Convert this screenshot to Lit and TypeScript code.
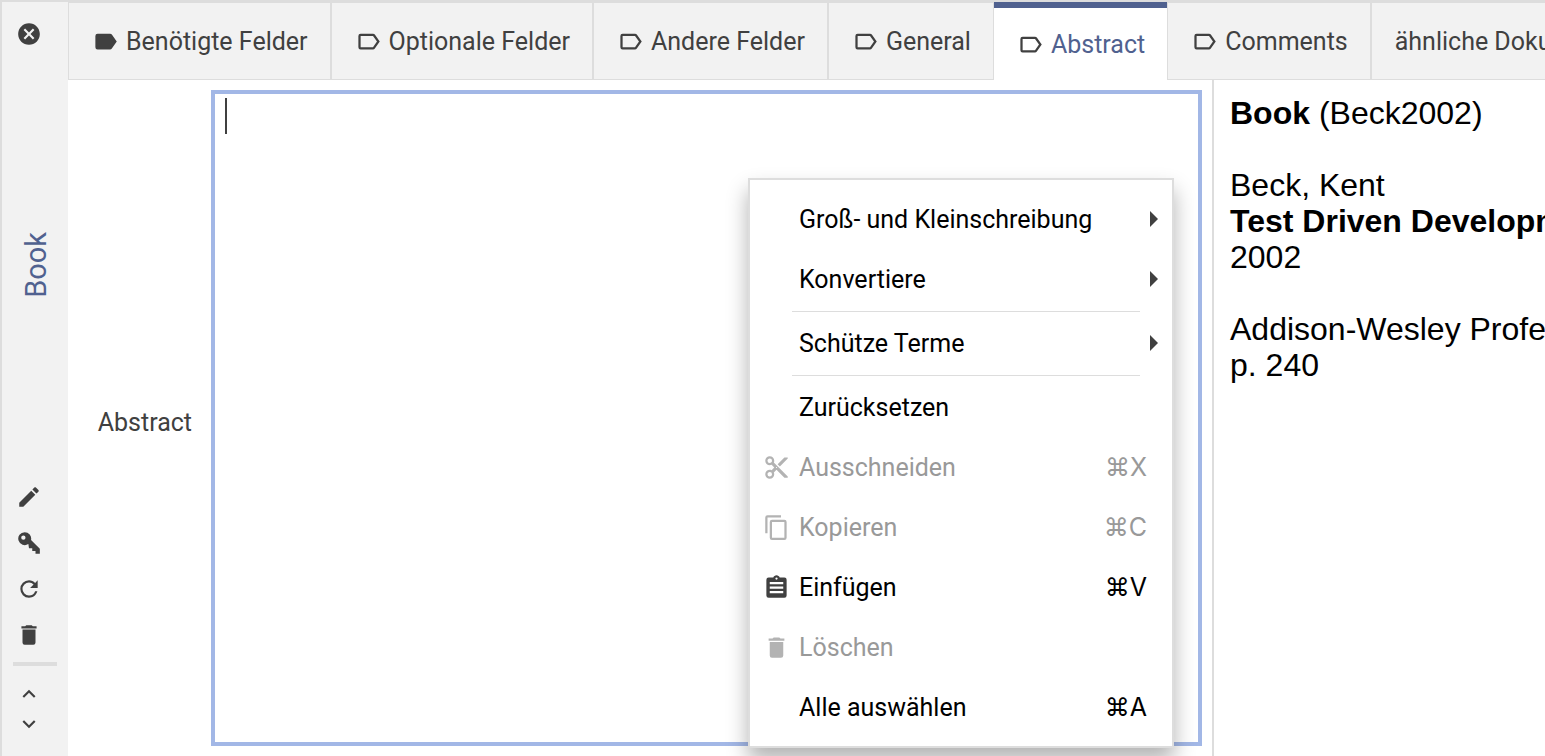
import { LitElement, html, css, svg, nothing } from "lit";
import { customElement, property, state } from "lit/decorators.js";
import { classMap } from "lit/directives/class-map.js";

const ICONS: Record<string, string> = {
  close:
    "M12 2C6.47 2 2 6.47 2 12s4.47 10 10 10 10-4.47 10-10S17.53 2 12 2ZM15.59 7 17 8.41 13.41 12 17 15.59 15.59 17 12 13.41 8.41 17 7 15.59 10.59 12 7 8.41 8.41 7 12 10.59Z",
  pencil:
    "M20.71 7.04c.39-.39.39-1.04 0-1.41l-2.34-2.34c-.37-.39-1.02-.39-1.41 0l-1.84 1.83 3.75 3.75M3 17.25V21h3.75L17.81 9.93l-3.75-3.75L3 17.25Z",
  key: "M8 2a6 6 0 0 1 5.900 7.200L22 17.400V22h-4v-2.600h-3v-2.600h-3L11.400 13A6 6 0 1 1 8 2ZM6.800 5.100a2 2 0 1 0 0 4 2 2 0 0 0 0-4Z",
  refresh:
    "M17.65 6.35C16.2 4.9 14.21 4 12 4a8 8 0 0 0-8 8 8 8 0 0 0 8 8c3.73 0 6.84-2.55 7.73-6h-2.08A5.99 5.99 0 0 1 12 18a6 6 0 0 1-6-6 6 6 0 0 1 6-6c1.66 0 3.14.69 4.22 1.78L13 11h7V4l-2.35 2.35Z",
  trash:
    "M19 4h-3.5l-1-1h-5l-1 1H5v2h14M6 19a2 2 0 0 0 2 2h8a2 2 0 0 0 2-2V7H6v12Z",
  up: "M7.41 15.41 12 10.83l4.59 4.58L18 14l-6-6-6 6 1.41 1.41Z",
  down: "M7.41 8.58 12 13.17l4.59-4.59L18 10l-6 6-6-6 1.41-1.42Z",
  label:
    "M17.63 5.84C17.27 5.33 16.67 5 16 5H5a2 2 0 0 0-2 2v10a2 2 0 0 0 2 2h11c.67 0 1.27-.34 1.63-.85L22 12l-4.37-6.16Z",
  labelOutline:
    "M16 17H5V7h11l3.55 5M17.63 5.84C17.27 5.33 16.67 5 16 5H5a2 2 0 0 0-2 2v10a2 2 0 0 0 2 2h11c.67 0 1.27-.34 1.63-.85L22 12l-4.37-6.16Z",
  cut: "M19 3l-6 6 2 2 7-7V3M12 12.500a.5.5 0 0 1-.5-.5.5.5 0 0 1 .5-.5.5.5 0 0 1 .5.5.5.5 0 0 1-.5.5M6 20a2 2 0 0 1-2-2c0-1.110.890-2 2-2a2 2 0 0 1 2 2c0 1.110-.890 2-2 2M6 8a2 2 0 0 1-2-2c0-1.110.890-2 2-2a2 2 0 0 1 2 2c0 1.110-.890 2-2 2m3.640-.360c.230-.5.360-1.050.360-1.640a4 4 0 0 0-4-4 4 4 0 0 0-4 4 4 4 0 0 0 4 4c.590 0 1.140-.130 1.640-.360L10 12l-2.360 2.360C7.140 14.130 6.590 14 6 14a4 4 0 0 0-4 4 4 4 0 0 0 4 4 4 4 0 0 0 4-4c0-.590-.130-1.140-.360-1.640L12 14l7 7h3v-1L9.640 7.640Z",
  copy: "M19 21H8V7h11m0-2H8a2 2 0 0 0-2 2v14a2 2 0 0 0 2 2h11a2 2 0 0 0 2-2V7a2 2 0 0 0-2-2m-3-4H4a2 2 0 0 0-2 2v14h2V3h12V1Z",
  paste:
    "M19 3h-4.180C14.400 1.840 13.300 1 12 1s-2.400.840-2.820 2H5a2 2 0 0 0-2 2v14a2 2 0 0 0 2 2h14a2 2 0 0 0 2-2V5a2 2 0 0 0-2-2m-7 0a1 1 0 0 1 1 1 1 1 0 0 1-1 1 1 1 0 0 1-1-1 1 1 0 0 1 1-1M6 7h12v2H6V7m0 4h12v2H6v-2m0 4h12v2H6v-2Z",
};

const icon = (name: string) => html`
  <svg class="icon" viewBox="0 0 24 24" aria-hidden="true">
    ${svg`<path fill="currentColor" fill-rule="evenodd" d=${ICONS[name]}></path>`}
  </svg>
`;

const base = css`
  * {
    box-sizing: border-box;
  }
  button {
    font: inherit;
    color: inherit;
    margin: 0;
    padding: 0;
    border: 0;
    background: none;
    text-align: left;
  }
  .icon {
    display: block;
    flex: none;
    width: 27px;
    height: 27px;
  }
  .title {
    padding-top: 2px;
  }
`;

@customElement("entry-sidebar")
class EntrySidebar extends LitElement {
  static styles = [
    base,
    css`
      :host {
        display: flex;
        flex-direction: column;
        padding: 9px 11px 17px;
        border-left: 2px solid #dddddd;
        background: #f2f2f2;
        color: #404040;
      }
      .icon {
        width: 26px;
        height: 26px;
      }
      .tool {
        display: grid;
        place-items: center;
        width: 32px;
        height: 46px;
      }
      .step {
        height: 30px;
      }
      .type {
        flex: 1;
        display: grid;
        place-items: center;
        padding-bottom: 2px;
        color: #50618f;
        font-size: 29px;
        line-height: 46px;
      }
      .type span {
        writing-mode: vertical-rl;
        rotate: 180deg;
      }
      hr {
        width: 44px;
        height: 4px;
        margin: 4px 0 13px;
        border: 0;
        background: #dddddd;
      }
    `,
  ];

  render() {
    const tool = (name: string, label: string, step = false) => html`
      <button class=${classMap({ tool: true, step })} aria-label=${label}>${icon(name)}</button>
    `;
    return html`
      ${tool("close", "Schließen")}
      <div class="type"><span>Book</span></div>
      ${tool("pencil", "Typ ändern")} ${tool("key", "Schlüssel erzeugen")}
      ${tool("refresh", "Aktualisieren")} ${tool("trash", "Löschen")}
      <hr />
      ${tool("up", "Vorheriger Eintrag", true)} ${tool("down", "Nächster Eintrag", true)}
    `;
  }
}

interface Tab {
  title: string;
  icon?: string;
}

@customElement("entry-tabs")
class EntryTabs extends LitElement {
  @property({ attribute: false }) tabs: Tab[] = [];
  @property() selected = "";

  static styles = [
    base,
    css`
      :host {
        display: block;
        overflow: hidden;
      }
      .tabs {
        display: flex;
        height: 78px;
      }
      .tab {
        display: flex;
        flex: none;
        align-items: center;
        gap: 7px;
        padding: 0 22px 0 23px;
        border: 1px solid #dddddd;
        background: #f2f2f2;
        color: #404040;
        white-space: nowrap;
      }
      .active {
        border-width: 6px 0 0;
        border-color: #50618f;
        background: #ffffff;
      }
      .active .title {
        color: #50618f;
      }
    `,
  ];

  private pick(title: string) {
    this.dispatchEvent(new CustomEvent("pick", { detail: title }));
  }

  render() {
    return html`
      <div class="tabs" role="tablist">
        ${this.tabs.map((t) => {
          const active = t.title === this.selected;
          return html`
            <button
              class=${classMap({ tab: true, active })}
              role="tab"
              aria-selected=${active}
              @click=${() => this.pick(t.title)}
            >
              ${t.icon ? icon(t.icon) : nothing}
              <span class="title">${t.title}</span>
            </button>
          `;
        })}
      </div>
    `;
  }
}

interface Item {
  text: string;
  icon?: string;
  keys?: string;
  submenu?: boolean;
  disabled?: boolean;
}

const MENU: Item[][] = [
  [
    { text: "Groß- und Kleinschreibung", submenu: true },
    { text: "Konvertiere", submenu: true },
  ],
  [{ text: "Schütze Terme", submenu: true }],
  [
    { text: "Zurücksetzen" },
    { text: "Ausschneiden", icon: "cut", keys: "⌘X", disabled: true },
    { text: "Kopieren", icon: "copy", keys: "⌘C", disabled: true },
    { text: "Einfügen", icon: "paste", keys: "⌘V" },
    { text: "Löschen", icon: "trash", disabled: true },
    { text: "Alle auswählen", keys: "⌘A" },
  ],
];

@customElement("field-menu")
class FieldMenu extends LitElement {
  static styles = [
    base,
    css`
      :host {
        display: block;
        width: 426px;
        padding: 9px 0;
        border: 2px solid #dddddd;
        background: #ffffff;
        box-shadow: 0 12px 20px rgba(0, 0, 0, 0.3);
        color: #000000;
      }
      .group + .group {
        padding-top: 4px;
        background: linear-gradient(#dddddd, #dddddd) 42px 2px / calc(100% - 74px) 1px no-repeat;
      }
      .item {
        display: grid;
        grid-template-columns: 27px 1fr auto;
        align-items: center;
        gap: 9px;
        width: 100%;
        height: 60px;
        padding: 0 25px 0 13px;
      }
      .submenu {
        padding-right: 14px;
      }
      .mark {
        color: #404040;
      }
      .item:disabled {
        color: #999999;
      }
      .item:disabled .mark {
        color: #b3b3b3;
      }
      .keys {
        font-family: Inter, sans-serif;
      }
      .arrow {
        display: block;
        width: 8px;
        height: 16px;
        background: #404040;
        clip-path: polygon(0 0, 100% 50%, 0 100%);
      }
    `,
  ];

  render() {
    return MENU.map(
      (group) => html`
        <div class="group" role="group">
          ${group.map(
            (i) => html`
              <button
                class=${classMap({ item: true, submenu: !!i.submenu })}
                role="menuitem"
                ?disabled=${i.disabled}
              >
                <span class="mark">${i.icon ? icon(i.icon) : nothing}</span>
                <span class="title">${i.text}</span>
                ${i.submenu
                  ? html`<span class="arrow"></span>`
                  : html`<span class="keys">${i.keys ?? ""}</span>`}
              </button>
            `,
          )}
        </div>
      `,
    );
  }
}

@customElement("app-root")
class AppRoot extends LitElement {
  @state() private selected = "Abstract";

  private tabs: Tab[] = [
    { title: "Benötigte Felder", icon: "label" },
    { title: "Optionale Felder", icon: "labelOutline" },
    { title: "Andere Felder", icon: "labelOutline" },
    { title: "General", icon: "labelOutline" },
    { title: "Abstract", icon: "labelOutline" },
    { title: "Comments", icon: "labelOutline" },
    { title: "ähnliche Dokumente" },
  ];

  static styles = [
    base,
    css`
      :host {
        display: grid;
        grid-template-columns: 68px minmax(0, 1fr);
        min-height: 100vh;
        overflow: hidden;
        border-top: 2px solid #dddddd;
        box-sizing: border-box;
        background: #ffffff;
        color: #404040;
        font-family: Roboto, Inter, sans-serif;
        font-size: 25px;
        line-height: 30px;
      }
      .main {
        display: grid;
        grid-template-rows: auto minmax(0, 1fr);
      }
      .content {
        display: grid;
        grid-template-columns: minmax(0, 1fr) 333px;
      }
      .form {
        display: grid;
        grid-template-columns: 124px minmax(0, 1fr);
        align-items: center;
        gap: 19px;
        padding: 10px 10px 10px 0;
      }
      .form label {
        padding-top: 10px;
        text-align: right;
      }
      .field {
        position: relative;
        align-self: stretch;
        display: grid;
      }
      textarea {
        width: 100%;
        padding: 4px 10px;
        border: 4px solid #a2b7e6;
        border-radius: 0;
        outline: 0;
        resize: none;
        background: #ffffff;
        color: #404040;
        caret-color: transparent;
        font: inherit;
      }
      .caret {
        position: absolute;
        left: 14px;
        top: 8px;
        width: 2px;
        height: 36px;
        background: #404040;
      }
      field-menu {
        position: absolute;
        left: 537px;
        top: 88px;
      }
      .preview {
        overflow: hidden;
        padding: 15px 0 0 16px;
        border-left: 2px solid #dddddd;
        color: #000000;
        font-family: "Liberation Sans", Arial, sans-serif;
        font-size: 32px;
        line-height: 36px;
        white-space: nowrap;
      }
      .preview p {
        margin: 0 0 36px;
      }
    `,
  ];

  render() {
    return html`
      <entry-sidebar></entry-sidebar>
      <div class="main">
        <entry-tabs
          .tabs=${this.tabs}
          .selected=${this.selected}
          @pick=${(e: CustomEvent<string>) => (this.selected = e.detail)}
        ></entry-tabs>
        <div class="content">
          <div class="form">
            <label for="abstract">Abstract</label>
            <div class="field">
              <textarea id="abstract"></textarea>
              <span class="caret"></span>
              <field-menu role="menu"></field-menu>
            </div>
          </div>
          <section class="preview">
            <p><b>Book</b> (Beck2002)</p>
            <p>Beck, Kent<br /><b>Test Driven Development</b><br />2002</p>
            <p>Addison-Wesley Professional<br />p. 240</p>
          </section>
        </div>
      </div>
    `;
  }
}
